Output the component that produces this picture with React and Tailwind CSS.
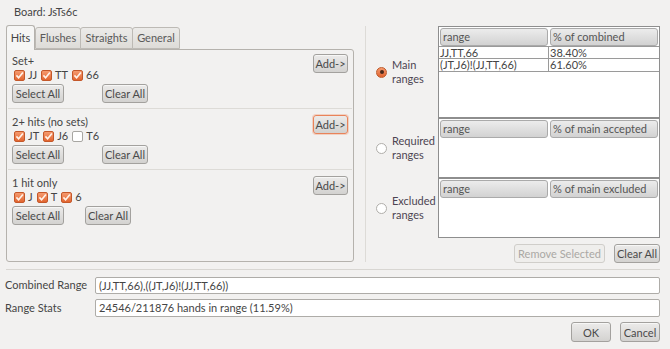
import React from "react";

const Btn = ({ children, className = "", focus = false, disabled = false }) => (
  <div
    className={`flex items-center justify-center rounded-[3px] border text-[11px] leading-none whitespace-nowrap ${
      disabled
        ? "border-[#d0ceca] bg-[#efeeec] text-[#aaa8a4]"
        : focus
        ? "border-[#e9835a] bg-gradient-to-b from-[#ecebea] to-[#d3d2d0] text-[#4a4a4a] shadow-[0_0_0_1px_rgba(240,150,110,0.35)]"
        : "border-[#a3a19e] bg-gradient-to-b from-[#ecebea] to-[#d3d2d0] text-[#4a4a4a] shadow-[inset_0_1px_0_rgba(255,255,255,0.6)]"
    } ${className}`}
  >
    {children}
  </div>
);

const Check = ({ on = true }) =>
  on ? (
    <span className="w-[11px] h-[11px] rounded-[2px] border border-[#c4582a] bg-gradient-to-b from-[#f59a6e] to-[#e2652f] flex items-center justify-center shrink-0">
      <svg width="9" height="9" viewBox="0 0 9 9">
        <path d="M1.4 4.4 L3.6 6.8 L7.9 1.6" stroke="#fff3ea" strokeWidth="1.6" fill="none" />
      </svg>
    </span>
  ) : (
    <span className="w-[11px] h-[11px] rounded-[2px] border border-[#a8a6a2] bg-white shrink-0" />
  );

const Item = ({ on = true, label }) => (
  <div className="flex items-center mr-[4px]">
    <Check on={on} />
    <span className="ml-[3px] leading-[14px]">{label}</span>
  </div>
);

const Section = ({ title, items, gap, last, pt }) => (
  <>
    <div className={`flex justify-between pl-[5px] pr-[5px] pb-[5px] ${pt}`}>
      <div className="flex flex-col">
        <div className="leading-[14px] h-[14px]">{title}</div>
        <div className="flex items-center h-[14px] ml-[2px]">
          {items.map((it, i) => (
            <Item key={i} on={it[1]} label={it[0]} />
          ))}
        </div>
        <div className="flex mt-[2px]">
          <Btn className="w-[52px] h-[19px]">Select All</Btn>
          <Btn className={`w-[46px] h-[19px] ${gap}`}>Clear All</Btn>
        </div>
      </div>
      <Btn className="w-[35px] h-[19px]" focus={title === "2+ hits (no sets)"}>
        Add-&gt;
      </Btn>
    </div>
    {!last && <div className="h-px bg-[#dddbd7] mx-[1px]" />}
  </>
);

const Radio = ({ on, l1, l2 }) => (
  <div className="flex items-center pl-[10px] h-full">
    {on ? (
      <span className="w-[11px] h-[11px] rounded-full border border-[#bf5a2a] bg-gradient-to-b from-[#f59a6e] to-[#e0632d] flex items-center justify-center shrink-0">
        <span className="w-[4px] h-[4px] rounded-full bg-[#4a2a1c]" />
      </span>
    ) : (
      <span className="w-[11px] h-[11px] rounded-full border border-[#b0aeaa] bg-white shrink-0" />
    )}
    <div className="ml-[5px] leading-[14px] text-[#4d4552]">
      <div>{l1}</div>
      <div>{l2}</div>
    </div>
  </div>
);

const Table = ({ col2, rows = [] }) => (
  <div className="h-full border border-[#8e8e8e] bg-white flex flex-col overflow-hidden">
    <div className="flex gap-[2px] p-[1px]">
      <div className="flex-1 h-[18px] rounded-[3px] border border-[#aaaaaa] bg-gradient-to-b from-[#ececec] to-[#d2d2d2] pl-[2px] leading-[16px] text-[#555]">
        range
      </div>
      <div className="flex-1 h-[18px] rounded-[3px] border border-[#aaaaaa] bg-gradient-to-b from-[#ececec] to-[#d2d2d2] pl-[2px] leading-[16px] text-[#555]">
        {col2}
      </div>
    </div>
    {rows.map((r, i) => (
      <div key={i} className={`flex border-y border-[#9a9a9a] -mt-px ${i === 0 ? "h-[13px]" : "h-[14px]"}`}>
        <div className="w-[110px] pl-[1px] border-r border-[#9a9a9a] leading-[12px]">{r[0]}</div>
        <div className="flex-1 pl-[1px] leading-[12px]">{r[1]}</div>
      </div>
    ))}
  </div>
);

export default function App() {
  return (
    <div className="w-[670px] h-[349px] bg-[#f2f1f0] text-[#454545] font-['Lato',sans-serif] text-[11px] flex flex-col overflow-hidden">
      <div className="flex h-[262px]">
        <div className="w-[354px] pl-[6px] flex flex-col shrink-0">
          <div className="h-[25px] pl-[8px] pt-[5px] leading-[14px]">Board: JsTs6c</div>
          <div className="flex items-end h-[24px] relative z-10">
            <div className="w-[29px] h-[25px] -mb-px border border-b-0 border-[#b5b2ad] rounded-t-[3px] bg-[#f6f6f5] flex items-center justify-center">
              Hits
            </div>
            <div className="w-[46px] h-[22px] border border-[#bdbab5] rounded-t-[3px] bg-gradient-to-b from-[#ecebe9] to-[#dedcd8] flex items-center justify-center text-[#5a5a5a]">
              Flushes
            </div>
            <div className="w-[53px] h-[22px] -ml-px border border-[#bdbab5] rounded-t-[3px] bg-gradient-to-b from-[#ecebe9] to-[#dedcd8] flex items-center justify-center text-[#5a5a5a]">
              Straights
            </div>
            <div className="w-[48px] h-[22px] -ml-px border border-[#bdbab5] rounded-t-[3px] bg-gradient-to-b from-[#ecebe9] to-[#dedcd8] flex items-center justify-center text-[#5a5a5a]">
              General
            </div>
          </div>
          <div className="w-[348px] flex-1 border border-[#b5b2ad] rounded-b-[3px] rounded-tr-[3px] bg-[#f2f1f0] flex flex-col">
            <Section
              title="Set+"
              items={[["JJ", true], ["TT", true], ["66", true]]}
              gap="ml-[38px]"
              pt="pt-[4px]"
            />
            <Section
              title="2+ hits (no sets)"
              items={[["JT", true], ["J6", true], ["T6", false]]}
              gap="ml-[38px]"
              pt="pt-[6px]"
            />
            <Section
              title="1 hit only"
              items={[["J", true], ["T", true], ["6", true]]}
              gap="ml-[21px]"
              pt="pt-[6px]"
              last
            />
          </div>
        </div>
        <div className="w-[11px] shrink-0" />
        <div className="w-px bg-[#dddbd7] mt-[26px] shrink-0" />
        <div className="flex-1 pt-[26px] pr-[10px] flex flex-col">
          <div className="grid grid-cols-[72px_1fr] grid-rows-[92px_60px_60px]">
            <Radio on l1="Main" l2="ranges" />
            <Table
              col2="% of combined"
              rows={[
                ["JJ,TT,66", "38.40%"],
                ["(JT,J6)!(JJ,TT,66)", "61.60%"],
              ]}
            />
            <Radio l1="Required" l2="ranges" />
            <Table col2="% of main accepted" />
            <Radio l1="Excluded" l2="ranges" />
            <Table col2="% of main excluded" />
          </div>
          <div className="flex justify-end gap-[9px] mt-[6px]">
            <Btn disabled className="w-[91px] h-[19px]">Remove Selected</Btn>
            <Btn className="w-[46px] h-[19px]">Clear All</Btn>
          </div>
        </div>
      </div>
      <div className="h-px bg-[#d8d6d2] mt-[7px] ml-[6px] mr-[10px]" />
      <div className="flex items-center mt-[7px] h-[17px] pl-[5px] pr-[10px]">
        <div className="w-[90px] shrink-0">Combined Range</div>
        <div className="flex-1 h-full border border-[#aeaca8] rounded-[2px] bg-white pl-[3px] leading-[15px]">
          (JJ,TT,66),((JT,J6)!(JJ,TT,66))
        </div>
      </div>
      <div className="flex items-center mt-[5px] h-[18px] pl-[5px] pr-[10px]">
        <div className="w-[90px] shrink-0">Range Stats</div>
        <div className="flex-1 h-full border border-[#aeaca8] rounded-[2px] bg-white pl-[3px] leading-[16px]">
          24546/211876 hands in range (11.59%)
        </div>
      </div>
      <div className="flex justify-end gap-[9px] mt-[5px] pr-[10px]">
        <Btn className="w-[40px] h-[20px]">OK</Btn>
        <Btn className="w-[40px] h-[20px]">Cancel</Btn>
      </div>
    </div>
  );
}
